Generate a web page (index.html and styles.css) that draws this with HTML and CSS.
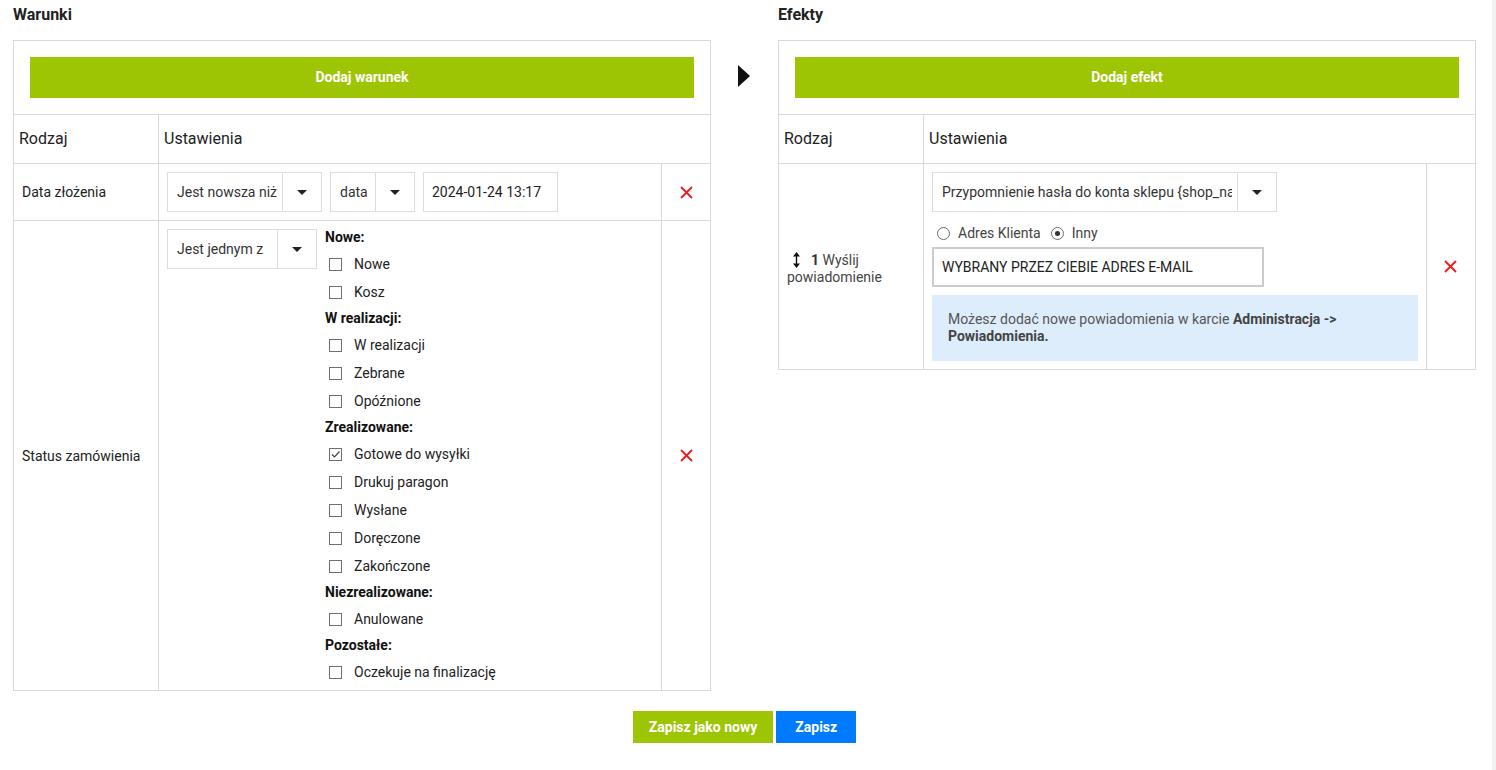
FILE: index.html
```html
<!DOCTYPE html>
<html lang="pl">
<head>
<meta charset="utf-8">
<title>Warunki i efekty</title>
<link rel="stylesheet" href="styles.css">
</head>
<body>
<div class="page">
  <div class="panels">
    <section class="panel">
      <h2 class="panel-title">Warunki</h2>
      <table class="grid">
        <colgroup><col class="col-kind"><col><col class="col-del"></colgroup>
        <tr><td colspan="3" class="add-cell"><button class="btn-add">Dodaj warunek</button></td></tr>
        <tr class="head"><th>Rodzaj</th><th colspan="2">Ustawienia</th></tr>
        <tr>
          <td class="kind">Data złożenia</td>
          <td class="settings">
            <div class="inline">
              <div class="select select--cond"><span class="select-text">Jest nowsza niż</span><span class="select-caret"></span></div>
              <div class="select select--unit"><span class="select-text">data</span><span class="select-caret"></span></div>
              <div class="field field--date">2024-01-24 13:17</div>
            </div>
          </td>
          <td class="del"><svg class="x-icon" viewBox="0 0 13 13"><path d="M1 1L12 12M12 1L1 12"/></svg></td>
        </tr>
        <tr>
          <td class="kind">Status zamówienia</td>
          <td class="settings">
            <div class="inline">
              <div class="select select--status"><span class="select-text">Jest jednym z</span><span class="select-caret"></span></div>
              <div class="checks">
                <div class="group-title">Nowe:</div>
                <div class="check"><span class="box"></span>Nowe</div>
                <div class="check"><span class="box"></span>Kosz</div>
                <div class="group-title">W realizacji:</div>
                <div class="check"><span class="box"></span>W realizacji</div>
                <div class="check"><span class="box"></span>Zebrane</div>
                <div class="check"><span class="box"></span>Opóźnione</div>
                <div class="group-title">Zrealizowane:</div>
                <div class="check"><span class="box"><svg class="tick" viewBox="0 0 11 11"><path d="M2 5.5L4.5 8L9.5 2.5"/></svg></span>Gotowe do wysyłki</div>
                <div class="check"><span class="box"></span>Drukuj paragon</div>
                <div class="check"><span class="box"></span>Wysłane</div>
                <div class="check"><span class="box"></span>Doręczone</div>
                <div class="check"><span class="box"></span>Zakończone</div>
                <div class="group-title">Niezrealizowane:</div>
                <div class="check"><span class="box"></span>Anulowane</div>
                <div class="group-title">Pozostałe:</div>
                <div class="check"><span class="box"></span>Oczekuje na finalizację</div>
              </div>
            </div>
          </td>
          <td class="del"><svg class="x-icon" viewBox="0 0 13 13"><path d="M1 1L12 12M12 1L1 12"/></svg></td>
        </tr>
      </table>
    </section>

    <div class="flow-arrow"><span class="triangle"></span></div>

    <section class="panel">
      <h2 class="panel-title">Efekty</h2>
      <table class="grid">
        <colgroup><col class="col-kind"><col><col class="col-del"></colgroup>
        <tr><td colspan="3" class="add-cell"><button class="btn-add">Dodaj efekt</button></td></tr>
        <tr class="head"><th>Rodzaj</th><th colspan="2">Ustawienia</th></tr>
        <tr>
          <td class="kind kind--effect">
            <svg class="move-icon" viewBox="0 0 7 16"><path d="M3.5 0L7 4.5H4.2V11.5H7L3.5 16L0 11.5H2.8V4.5H0Z"/></svg><b class="num">1</b> Wyślij powiadomienie
          </td>
          <td class="settings settings--effect">
            <div class="select select--notify"><span class="select-text">Przypomnienie hasła do konta sklepu {shop_name}</span><span class="select-caret"></span></div>
            <div class="radios">
              <span class="radio"></span><span class="radio-label">Adres Klienta</span>
              <span class="radio radio--on"></span><span class="radio-label">Inny</span>
            </div>
            <div class="field field--email">WYBRANY PRZEZ CIEBIE ADRES E-MAIL</div>
            <div class="info">Możesz dodać nowe powiadomienia w karcie <b>Administracja -&gt; Powiadomienia.</b></div>
          </td>
          <td class="del"><svg class="x-icon" viewBox="0 0 13 13"><path d="M1 1L12 12M12 1L1 12"/></svg></td>
        </tr>
      </table>
    </section>
  </div>

  <div class="actions">
    <button class="btn btn--green">Zapisz jako nowy</button>
    <button class="btn btn--blue">Zapisz</button>
  </div>
</div>
</body>
</html>
```

FILE: styles.css
```css
html {
  background: #f1f1f1;
}
body {
  margin: 0;
  font-family: Roboto, "Liberation Sans", sans-serif;
  font-size: 14px;
  color: #212121;
}
.page {
  width: 1492px;
  min-height: 770px;
  box-sizing: border-box;
  background: #fff;
  padding: 5px 16px 0 13px;
}
.panels {
  display: flex;
  align-items: flex-start;
}
.panel {
  width: 698px;
}
.panel-title {
  margin: 0 0 15px;
  font-size: 16px;
  line-height: 20px;
  font-weight: 700;
  color: #222;
}
.flow-arrow {
  width: 67px;
  box-sizing: border-box;
  padding: 60px 0 0 27px;
}
.triangle {
  display: block;
  width: 0;
  height: 0;
  border-top: 11px solid transparent;
  border-bottom: 11px solid transparent;
  border-left: 12px solid #111;
}
.grid {
  width: 698px;
  border-collapse: collapse;
  table-layout: fixed;
}
.grid td, .grid th {
  border: 1px solid #d9d9d9;
  padding: 0;
}
.col-kind { width: 145px; }
.col-del { width: 49px; }
.add-cell {
  padding: 16px !important;
}
.btn-add {
  display: block;
  width: 100%;
  height: 41px;
  border: 0;
  background: #9ec504;
  color: #fff;
  font-family: Roboto, "Liberation Sans", sans-serif;
  font-size: 14px;
  font-weight: 700;
  line-height: 40px;
  padding: 0 0 1px;
  cursor: pointer;
}
.head th {
  text-align: left;
  font-weight: 400;
  font-size: 16px;
  line-height: 20px;
  padding: 14px 5px !important;
  color: #222;
}
.kind {
  padding: 0 8px !important;
  vertical-align: middle;
  color: #222;
}
.kind--effect {
  color: #444;
  line-height: 17px;
  padding-top: 4px !important;
}
.move-icon {
  width: 7px;
  height: 16px;
  fill: #111;
  margin: 0 11px 0 6px;
  vertical-align: -3px;
}
.num {
  color: #333;
}
.settings {
  padding: 4px 8px !important;
  vertical-align: top;
}
.inline {
  display: flex;
  align-items: flex-start;
}
.select {
  display: flex;
  height: 40px;
  box-sizing: border-box;
  border: 1px solid #ddd;
  margin: 4px 8px 4px 0;
  background: #fff;
  color: #333;
}
.select-text {
  flex: 1;
  min-width: 0;
  padding: 0 0 0 9px;
  margin-right: 5px;
  line-height: 38px;
  white-space: nowrap;
  overflow: hidden;
}
.select-caret {
  width: 38px;
  display: flex;
  align-items: center;
  justify-content: center;
  border-left: 1px solid #ddd;
}
.select-caret::after {
  content: "";
  border-left: 5px solid transparent;
  border-right: 5px solid transparent;
  border-top: 5px solid #222;
}
.select--cond { width: 155px; }
.select--unit { width: 85px; }
.select--status { width: 150px; }
.select--notify { width: 345px; margin-right: 0; }
.field {
  box-sizing: border-box;
  height: 40px;
  border: 1px solid #ddd;
  margin: 4px 0;
  padding: 0 8px;
  line-height: 38px;
  color: #222;
}
.field--date { width: 135px; }
.field--email {
  width: 332px;
  border: 2px solid #ccc;
  line-height: 36px;
  margin: 0;
  padding: 0 8px;
}
.checks {
  display: flex;
  flex-direction: column;
}
.group-title {
  height: 25px;
  line-height: 25px;
  font-weight: 700;
  color: #111;
}
.check {
  height: 28px;
  display: flex;
  align-items: center;
  padding-left: 4px;
  color: #222;
}
.box {
  width: 13px;
  height: 13px;
  box-sizing: border-box;
  border: 1px solid #6f6f6f;
  margin-right: 12px;
  display: flex;
  align-items: center;
  justify-content: center;
}
.tick {
  width: 11px;
  height: 11px;
  fill: none;
  stroke: #444;
  stroke-width: 1.2;
}
.del {
  text-align: center;
  vertical-align: middle;
}
.x-icon {
  width: 13px;
  height: 13px;
  display: block;
  margin: 0 auto;
  stroke: #f21b1b;
  stroke-width: 1.8;
}
.radios {
  display: flex;
  align-items: center;
  height: 20px;
  margin: 11px 0 4px;
  padding-left: 5px;
  color: #444;
}
.radio {
  width: 13px;
  height: 13px;
  box-sizing: border-box;
  border: 1px solid #6f6f6f;
  border-radius: 50%;
  margin-right: 8px;
  display: flex;
  align-items: center;
  justify-content: center;
}
.radio--on::after {
  content: "";
  width: 5px;
  height: 5px;
  border-radius: 50%;
  background: #333;
}
.radio-label {
  margin-right: 10px;
}
.info {
  margin: 8px 0 4px;
  padding: 16px;
  background: #deedfc;
  color: #555;
  line-height: 17px;
}
.info b {
  color: #444;
}
.actions {
  display: flex;
  justify-content: center;
  gap: 3px;
  margin-top: 20px;
}
.btn {
  height: 32px;
  border: 0;
  padding: 0 16px;
  color: #fff;
  font-family: Roboto, "Liberation Sans", sans-serif;
  font-size: 14px;
  font-weight: 700;
  cursor: pointer;
}
.btn--green { background: #9ec504; }
.btn--blue { background: #007bff; width: 80px; }
```
